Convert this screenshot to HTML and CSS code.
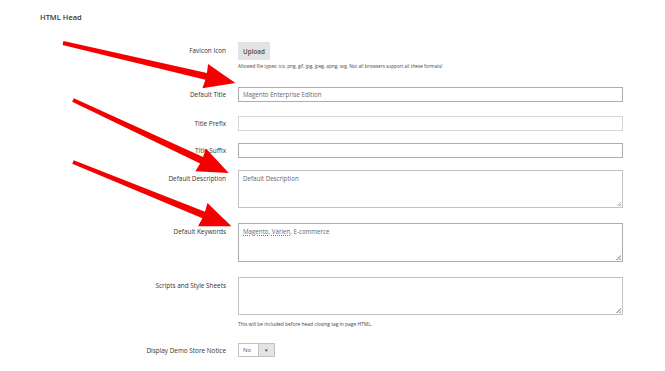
FILE: index.html
```html
<!DOCTYPE html>
<html lang="en">
  <head>
    <meta charset="UTF-8" />
    <title>HTML Head</title>
    <link rel="stylesheet" href="styles.css">
  </head>
  <body>
    <div class="page">
      <h2 class="section-title">HTML Head</h2>

      <div class="form">
        <div class="field">
          <label class="label">Favicon Icon</label>
          <div class="control">
            <button class="upload">Upload</button>
            <p class="note">Allowed file types: ico, png, gif, jpg, jpeg, apng, svg. Not all browsers support all these formats!</p>
          </div>
        </div>

        <div class="field field-title">
          <label class="label">Default Title</label>
          <div class="control">
            <div class="input">Magento Enterprise Edition</div>
          </div>
        </div>

        <div class="field">
          <label class="label">Title Prefix</label>
          <div class="control">
            <div class="input input-light"></div>
          </div>
        </div>

        <div class="field">
          <label class="label">Title Suffix</label>
          <div class="control">
            <div class="input"></div>
          </div>
        </div>

        <div class="field field-area">
          <label class="label">Default Description</label>
          <div class="control">
            <div class="textarea">Default Description</div>
          </div>
        </div>

        <div class="field field-area">
          <label class="label">Default Keywords</label>
          <div class="control">
            <div class="textarea textarea-dark"><span class="typo">Magento</span>, <span class="typo">Varien</span>, E-commerce</div>
          </div>
        </div>

        <div class="field field-area">
          <label class="label">Scripts and Style Sheets</label>
          <div class="control">
            <div class="textarea"></div>
            <p class="note note-scripts">This will be included before head closing tag in page HTML.</p>
          </div>
        </div>

        <div class="field">
          <label class="label">Display Demo Store Notice</label>
          <div class="control">
            <div class="select">
              <span class="select-value">No</span>
              <span class="select-arrow">&#9662;</span>
            </div>
          </div>
        </div>
      </div>

      <!-- annotation arrows drawn over the form -->
      <svg class="arrows" width="665" height="371" viewBox="0 0 665 371">
        <polygon transform="translate(63 43) rotate(13.1)" points="0,-2 147,-3.5 146,-12.5 177,0 146,12.5 147,3.5 0,2" />
        <polygon transform="translate(73 100) rotate(25.1)" points="0,-2 142,-3.5 141,-12.5 172,0 141,12.5 142,3.5 0,2" />
        <polygon transform="translate(73 162) rotate(22.05)" points="0,-2 141,-3.5 140,-12.5 171,0 140,12.5 141,3.5 0,2" />
      </svg>
    </div>
  </body>
</html>
```

FILE: styles.css
```css
* {
  padding: 0;
  margin: 0;
  box-sizing: border-box;
}
body {
  background-color: #ffffff;
  font-family: "Open Sans", "Liberation Sans", sans-serif;
  color: #333333;
}
.page {
  position: relative;
  width: 665px;
  height: 371px;
  overflow: hidden;
  padding-top: 12px;
}
.section-title {
  margin-left: 40px;
  font-size: 7.5px;
  line-height: 10px;
  font-weight: 600;
  color: #41362f;
}
.form {
  margin-top: 20px;
}
.field {
  display: grid;
  grid-template-columns: 226px 385px;
  column-gap: 12px;
  margin-bottom: 12px;
}
.label {
  text-align: right;
  font-size: 6.4px;
  font-weight: 400;
  color: #333333;
  line-height: 15px;
}
.field:first-child {
  margin-bottom: 17px;
}
.field:first-child .label {
  line-height: 18px;
}
.field-title {
  margin-bottom: 14px;
}
.field-area {
  margin-bottom: 15px;
}
.field-area .label {
  line-height: 8px;
  padding-top: 5px;
}
.upload {
  display: block;
  width: 32px;
  height: 18px;
  border: none;
  background-color: #e3e3e3;
  color: #514943;
  font-family: inherit;
  font-size: 6.3px;
  font-weight: 600;
}
.note {
  margin-top: 2px;
  font-size: 4.7px;
  line-height: 8px;
  color: #444444;
}
.note-scripts {
  margin-top: 5px;
  font-size: 4.9px;
}
.input {
  height: 15px;
  border: 1px solid #adadad;
  padding: 0 4px;
  font-size: 6.2px;
  line-height: 13px;
  color: #666666;
}
.input-light {
  border-color: #d6d6d6;
}
.textarea {
  position: relative;
  height: 38px;
  border: 1px solid #c2c2c2;
  padding: 3px 4px;
  font-size: 6.2px;
  line-height: 9px;
  color: #666666;
}
.textarea-dark {
  height: 39px;
  border-color: #adadad;
}
.textarea::after {
  content: "";
  position: absolute;
  right: 1px;
  bottom: 1px;
  width: 5px;
  height: 5px;
  background: linear-gradient(135deg, transparent 50%, #b5b5b5 50%, #b5b5b5 62%, transparent 62%, transparent 75%, #b5b5b5 75%);
}
.typo {
  text-decoration: underline dotted #e04040;
  text-decoration-thickness: 1px;
  text-underline-offset: 1px;
}
.select {
  display: flex;
  width: 37px;
  height: 14px;
  border: 1px solid #c2c2c2;
  font-size: 6px;
  line-height: 12px;
  color: #666666;
}
.select-value {
  flex: 1;
  padding-left: 4px;
}
.select-arrow {
  width: 16px;
  text-align: center;
  background-color: #e3e3e3;
  border-left: 1px solid #c2c2c2;
  font-size: 5px;
  color: #41362f;
}
.arrows {
  position: absolute;
  top: 0;
  left: 0;
  fill: #f40000;
  pointer-events: none;
}
```
